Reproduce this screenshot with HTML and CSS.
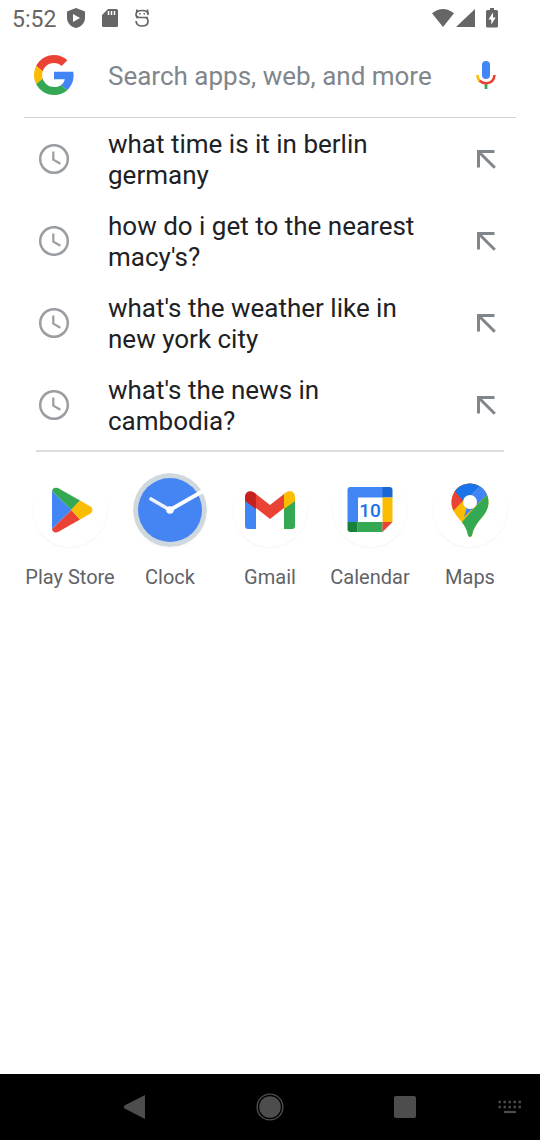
FILE: index.html
```html
<!DOCTYPE html>
<html lang="en">
<head>
<meta charset="utf-8">
<meta name="viewport" content="width=device-width, initial-scale=1">
<title>Search</title>
<link rel="stylesheet" href="styles.css">
</head>
<body>
<svg width="0" height="0" class="defs" aria-hidden="true">
  <symbol id="history" viewBox="0 0 30 30">
    <circle cx="15" cy="15" r="13.8" fill="none" stroke="#9a9da1" stroke-width="2.5"/>
    <path d="M14.300 7.500V15.700L21.400 19.800" fill="none" stroke="#9a9da1" stroke-width="2.200"/>
  </symbol>
  <symbol id="insert" viewBox="0 0 20 20">
    <path d="M2.500 18.500V2.500H18.500M2.500 2.500L18.800 18.800" fill="none" stroke="#80868b" stroke-width="3"/>
  </symbol>
</svg>

<header class="status">
  <time class="status-time">5:52</time>
  <div class="status-left">
    <svg width="18" height="20" viewBox="0 0 18 20"><path d="M9 0L18 3.500V10C18 15 14 19 9 20C4 19 0 15 0 10V3.500Z" fill="#666"/><path d="M6 6V14L13 10Z" fill="#fff"/></svg>
    <svg width="16" height="20" viewBox="0 0 16 20"><path d="M6 1H14.500Q16 1 16 2.500V17.500Q16 19 14.500 19H1.500Q0 19 0 17.500V7Z" fill="#666"/><path d="M6.500 3V7M9.500 3V7M12.500 3V7" stroke="#fff" stroke-width="1.500"/></svg>
    <svg width="14" height="20" viewBox="0 0 14 20"><path d="M13 3.500V7M1.800 1.500V4M12.500 1.500V4M13 9.500H4.500Q1 9.500 1 6.500Q1 2.500 7 2.500T13 6.500M1 9.500H9.500Q13 9.500 13 13.500Q13 18 7 18Q1.500 18 1 13" fill="none" stroke="#666" stroke-width="1.700"/><path d="M4 5H5.600V6.600H4ZM8.500 5H10.100V6.600H8.500Z" fill="#666"/></svg>
  </div>
  <div class="status-right">
    <svg width="22" height="18" viewBox="0 0 22 18"><path d="M0 4.300Q11 -4.300 22 4.300L11 18Z" fill="#666"/></svg>
    <svg width="19" height="18" viewBox="0 0 19 18"><path d="M19 0V18H0Z" fill="#666"/></svg>
    <svg class="battery" width="12" height="20" viewBox="0 0 12 20"><path d="M4 0H8V2H10.500Q12 2 12 3.500V18Q12 19.500 10.500 19.500H1.500Q0 19.500 0 18V3.500Q0 2 1.500 2H4Z" fill="#666"/><path d="M7 4.500L2.500 11.500H5.300V16.500L9.700 9.500H7Z" fill="#fff"/></svg>
  </div>
</header>

<main class="content">
  <form class="search" role="search">
    <svg class="lead" width="40" height="40" viewBox="0 0 48 48" role="img" aria-label="Google">
      <path fill="#ea4335" d="M24 9.500c3.540 0 6.710 1.220 9.210 3.600l6.850-6.850C35.900 2.380 30.470 0 24 0 14.620 0 6.510 5.380 2.560 13.220l7.980 6.190C12.430 13.720 17.740 9.500 24 9.500z"/>
      <path fill="#4285f4" d="M47.500 24.550c0-1.570-.15-3.090-.38-4.550H24v9.020h12.940c-.58 2.960-2.260 5.480-4.780 7.180l7.730 6c4.510-4.180 7.610-10.360 7.610-17.650z"/>
      <path fill="#fbbc05" d="M10.530 28.590c-.48-1.450-.76-2.990-.76-4.590s.27-3.140.76-4.590l-7.980-6.190C.92 16.460 0 20.120 0 24c0 3.880.92 7.540 2.560 10.780l7.970-6.190z"/>
      <path fill="#34a853" d="M24 48c6.480 0 11.930-2.130 15.890-5.810l-7.730-6c-2.150 1.450-4.920 2.300-8.160 2.300-6.260 0-11.570-4.220-13.470-9.910l-7.980 6.190C6.510 42.620 14.620 48 24 48z"/>
    </svg>
    <input class="search-input" type="text" aria-label="Search" placeholder="Search apps, web, and more">
    <button class="icon-button" type="button" aria-label="Voice search">
      <svg width="20" height="28" viewBox="0 0 20 28"><rect x="6" y="0" width="8" height="18" rx="4" fill="#4285f4"/><path d="M10 22V28" stroke="#34a853" stroke-width="2.800"/><path d="M1.500 14Q1.500 18 4 20.200" fill="none" stroke="#fbbc05" stroke-width="2.600"/><path d="M3.600 19.800Q6.200 22.300 10 22.300Q18 22 18.500 14" fill="none" stroke="#ea4335" stroke-width="2.600"/></svg>
    </button>
  </form>

  <ul class="history">
    <li class="item"><svg class="lead" width="30" height="30"><use href="#history"/></svg><a class="query" href="#">what time is it in berlin germany</a><button class="icon-button" type="button" aria-label="Insert what time is it in berlin germany"><svg width="20" height="20"><use href="#insert"/></svg></button></li>
    <li class="item"><svg class="lead" width="30" height="30"><use href="#history"/></svg><a class="query" href="#">how do i get to the nearest macy's?</a><button class="icon-button" type="button" aria-label="Insert how do i get to the nearest macy's?"><svg width="20" height="20"><use href="#insert"/></svg></button></li>
    <li class="item"><svg class="lead" width="30" height="30"><use href="#history"/></svg><a class="query" href="#">what's the weather like in new york city</a><button class="icon-button" type="button" aria-label="Insert what's the weather like in new york city"><svg width="20" height="20"><use href="#insert"/></svg></button></li>
    <li class="item"><svg class="lead" width="30" height="30"><use href="#history"/></svg><a class="query" href="#">what's the news in cambodia?</a><button class="icon-button" type="button" aria-label="Insert what's the news in cambodia?"><svg width="20" height="20"><use href="#insert"/></svg></button></li>
  </ul>

  <nav class="apps" aria-label="Apps">
    <a class="app" href="#">
      <svg class="disc" width="74" height="74" viewBox="0 0 74 74">
        <path fill="#4285f4" d="M19 18L38.500 37L19 56Z"/>
        <path fill="#34a853" d="M19 18Q20 13.500 25 15L47 27.500L38.500 37L19 18Z"/>
        <path fill="#ea4335" d="M19 56Q20 60.500 25 59L47 46.500L38.500 37L19 56Z"/>
        <path fill="#fbbc04" d="M47 27.500L57.500 33.500Q61.500 37 57.500 40.500L47 46.500L38 37Z"/>
      </svg>Play Store</a>
    <a class="app" href="#">
      <svg class="disc" width="74" height="74" viewBox="0 0 74 74">
        <circle cx="37" cy="37" r="37" fill="#cfd8dc"/><circle cx="37" cy="37" r="32" fill="#4484f3"/>
        <path d="M18 26L37 37" stroke="#edf3ff" stroke-width="3.600" stroke-linecap="round"/>
        <path d="M37 37L70 18" stroke="#fff" stroke-width="3.800"/><circle cx="37" cy="37" r="3.800" fill="#fff"/>
      </svg>Clock</a>
    <a class="app" href="#">
      <svg class="disc" width="74" height="74" viewBox="0 0 74 74">
        <path fill="#4285f4" d="M12 26L23 34V56H15Q12 56 12 53Z"/>
        <path fill="#34a853" d="M62 26L51 34V56H59Q62 56 62 53Z"/>
        <path fill="#ea4335" d="M23 21L37 32L51 21V35L37 46L23 35Z"/>
        <path fill="#c5221f" d="M12 29V24C12 18 18 16.500 22 20L23 21V36L12 28Z"/>
        <path fill="#fbbc04" d="M62 29V24C62 18 56 16.500 52 20L51 21V36L62 28Z"/>
      </svg>Gmail</a>
    <a class="app" href="#">
      <svg class="disc" width="74" height="74" viewBox="0 0 74 74">
        <path fill="#4285f4" d="M17.500 14H50V24.500H25V49H14.500V17Q14.500 14 17.500 14Z"/>
        <path fill="#1967d2" d="M49.500 14H56.500Q59.500 14 59.500 17V24.500H49.500Z"/>
        <path fill="#fbbc04" d="M49.500 24.500H59.500V49H49.500Z"/>
        <path fill="#34a853" d="M24.500 49H49.500V59H24.500Z"/>
        <path fill="#188038" d="M14.500 49H24.500V59H17.500Q14.500 59 14.500 56Z"/>
        <path fill="#ea4335" d="M49.500 49H59.500L49.500 59Z"/>
        <text class="calendar-day" x="37" y="44" text-anchor="middle">10</text>
      </svg>Calendar</a>
    <a class="app" href="#">
      <svg class="disc" width="74" height="74" viewBox="0 0 74 74">
        <clipPath id="pin"><path d="M37 10.500C26 10.500 18.500 19 18.500 29C18.500 37 23 42.500 28 48C32 53 34 56.500 34.800 61.500C35.300 64.800 38.700 64.800 39.200 61.500C40 56.500 43 52 46 48C51 42 55.500 37 55.500 29C55.500 19 48 10.500 37 10.500Z"/></clipPath>
        <g clip-path="url(#pin)">
          <path fill="#fbbc04" d="M0 0H74V74H0Z"/>
          <path fill="#ea4335" d="M0 0H50L37 21L20 38L10 49H0Z"/>
          <path fill="#1a73e8" d="M15 10L20 0H60L31 29Z"/>
          <path fill="#4285f4" d="M50 9L74 0V18L54 22L31 44L37 23Z"/>
          <path fill="#34a853" d="M55 21L74 16V74H0L29 49L42 34Z"/>
        </g>
        <circle cx="37" cy="29" r="7" fill="#fff"/>
      </svg>Maps</a>
  </nav>
</main>

<footer class="system-nav">
  <button class="nav-button nav-back" type="button" aria-label="Back"><svg width="22" height="26" viewBox="0 0 22 26"><path d="M22 1V25L1.500 14.500Q0 13 1.500 11.500Z" fill="#4d4d4d"/></svg></button>
  <button class="nav-button nav-home" type="button" aria-label="Home"><svg width="28" height="28" viewBox="0 0 28 28"><circle cx="14" cy="14" r="10.800" fill="#4d4d4d"/><circle cx="14" cy="14" r="12.900" fill="none" stroke="#4d4d4d" stroke-width="1.400"/></svg></button>
  <button class="nav-button nav-recent" type="button" aria-label="Recent apps"><svg width="24" height="24" viewBox="0 0 24 24"><rect x="1" y="1" width="22" height="22" rx="2" fill="#4d4d4d"/></svg></button>
  <button class="nav-button nav-keyboard" type="button" aria-label="Switch keyboard"><svg width="24" height="14" viewBox="0 0 24 14"><path d="M.5 2H24M.5 7H24" stroke="#4d4d4d" stroke-width="2.400" stroke-dasharray="2.400 2.600"/><path d="M6 12H18" stroke="#4d4d4d" stroke-width="2.200"/></svg></button>
</footer>
</body>
</html>
```
FILE: styles.css
```css
* {
  box-sizing: border-box;
}

body {
  margin: 0;
  min-height: 100vh;
  display: flex;
  flex-direction: column;
  background: #fff;
  color: #202124;
  font-family: Roboto, "Noto Sans", sans-serif;
}

svg {
  display: block;
}

.defs {
  position: absolute;
}

button {
  display: flex;
  align-items: center;
  justify-content: center;
  padding: 0;
  border: 0;
  background: none;
}

a {
  color: inherit;
  text-decoration: none;
}

.status {
  display: flex;
  align-items: center;
  height: 36px;
  padding: 0 42px 0 12px;
  color: #666;
}

.status-time {
  font-size: 23px;
  line-height: 32px;
  padding-top: 4px;
}

.status-left {
  display: flex;
  gap: 17px;
  margin-left: 11px;
}

.status-right {
  display: flex;
  align-items: center;
  gap: 2px;
  margin-left: auto;
}

.battery {
  margin-left: 9px;
}

.content {
  flex: 1;
}

.search {
  display: grid;
  grid-template-columns: 60px 1fr 60px;
  align-items: center;
  margin: 0 24px;
  padding: 17px 0 20px;
  border-bottom: 1px solid #d0d2d4;
}

.lead {
  justify-self: center;
}

.search-input {
  min-width: 0;
  margin-left: 24px;
  padding: 2px 0 0;
  border: 0;
  outline: 0;
  background: none;
  color: #202124;
  font: 26px/42px Roboto, "Noto Sans", sans-serif;
}

.search-input::placeholder {
  color: #80868b;
  opacity: 1;
}

.history {
  list-style: none;
  margin: 0 36px;
  padding: 0 0 4px;
  border-bottom: 2px solid #dadce0;
}

.item {
  display: grid;
  grid-template-columns: 36px 1fr 36px;
  align-items: center;
  padding: 9px 0;
}

.query {
  padding: 2px 36px 0;
  font-size: 26px;
  line-height: 31px;
}

.apps {
  display: grid;
  grid-template-columns: repeat(5, 1fr);
  padding: 21px 20px 0 20px;
}

.app {
  display: flex;
  flex-direction: column;
  align-items: center;
  gap: 18px;
  color: #5f6368;
  font-size: 20px;
  line-height: 24px;
  white-space: nowrap;
}

.disc {
  border-radius: 50%;
  box-shadow: 0 1px 2px #0000000d;
}

.calendar-day {
  fill: #1a73e8;
  font-size: 19px;
  font-weight: 500;
}

.system-nav {
  display: grid;
  grid-template-columns: 1fr 2fr 2fr 2fr 1fr;
  height: 66px;
  background: #000;
}

.nav-back {
  grid-column: 2;
  padding-right: 3px;
}

.nav-keyboard {
  padding-left: 8px;
}
```
